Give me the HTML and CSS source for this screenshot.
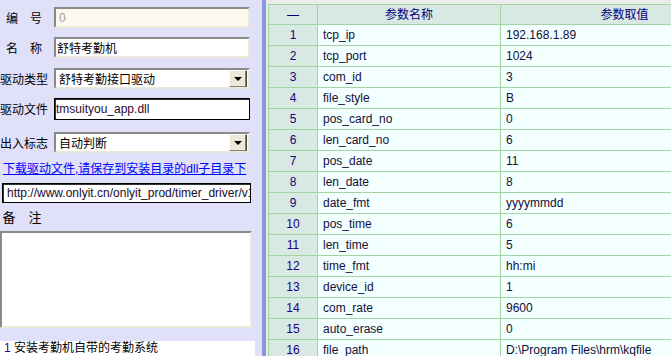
FILE: index.html
```html
<!DOCTYPE html>
<html lang="zh">
<head>
<meta charset="utf-8">
<title>考勤机</title>
<link rel="stylesheet" href="styles.css">
</head>
<body>
<div class="app">
  <div class="left">
    <div class="field f1"><span class="lbl">编　号</span><div class="box inset disabled">0</div></div>
    <div class="field f2"><span class="lbl">名　称</span><div class="box inset">舒特考勤机</div></div>
    <div class="field f3"><span class="lbl">驱动类型</span><div class="box inset select"><span class="val">舒特考勤接口驱动</span><span class="drop"><i class="tri"></i></span></div></div>
    <div class="field f4"><span class="lbl">驱动文件</span><div class="box solid file">tmsuityou_app.dll</div></div>
    <div class="field f5"><span class="lbl">出入标志</span><div class="box inset select"><span class="val">自动判断</span><span class="drop"><i class="tri"></i></span></div></div>
    <a class="dl" href="#">下载驱动文件,请保存到安装目录的dll子目录下</a>
    <div class="url solid">http://www.onlyit.cn/onlyit_prod/timer_driver/v1/tmsuityou_app.dll</div>
    <div class="memo-lbl">备　注</div>
    <div class="memo inset"></div>
    <div class="status"><span class="num">1</span> 安装考勤机自带的考勤系统</div>
  </div>
  <div class="divider"></div>
  <div class="right">
    <table class="grid">
      <colgroup><col class="c1"><col class="c2"><col class="c3"></colgroup>
      <thead><tr><th>—</th><th>参数名称</th><th>参数取值</th></tr></thead>
      <tbody>
        <tr><td class="n">1</td><td>tcp_ip</td><td>192.168.1.89</td></tr>
        <tr><td class="n">2</td><td>tcp_port</td><td>1024</td></tr>
        <tr><td class="n">3</td><td>com_id</td><td>3</td></tr>
        <tr><td class="n">4</td><td>file_style</td><td>B</td></tr>
        <tr><td class="n">5</td><td>pos_card_no</td><td>0</td></tr>
        <tr><td class="n">6</td><td>len_card_no</td><td>6</td></tr>
        <tr><td class="n">7</td><td>pos_date</td><td>11</td></tr>
        <tr><td class="n">8</td><td>len_date</td><td>8</td></tr>
        <tr><td class="n">9</td><td>date_fmt</td><td>yyyymmdd</td></tr>
        <tr><td class="n">10</td><td>pos_time</td><td>6</td></tr>
        <tr><td class="n">11</td><td>len_time</td><td>5</td></tr>
        <tr><td class="n">12</td><td>time_fmt</td><td>hh:mi</td></tr>
        <tr><td class="n">13</td><td>device_id</td><td>1</td></tr>
        <tr><td class="n">14</td><td>com_rate</td><td>9600</td></tr>
        <tr><td class="n">15</td><td>auto_erase</td><td>0</td></tr>
        <tr><td class="n">16</td><td>file_path</td><td>D:\Program Files\hrm\kqfile</td></tr>
      </tbody>
    </table>
  </div>
</div>
</body>
</html>
```
FILE: styles.css
```css
html, body {
  margin: 0;
  padding: 0;
  width: 671px;
  height: 356px;
  overflow: hidden;
  font-family: "Liberation Sans", "Noto Sans CJK SC", sans-serif;
  font-size: 12px;
}
.app {
  display: flex;
  width: 671px;
  height: 356px;
  overflow: hidden;
}
.left {
  width: 262px;
  flex: none;
  background: #e0e0f8;
  display: flex;
  flex-direction: column;
}
.field {
  display: flex;
  align-items: center;
  height: 21px;
}
.f1 { margin-top: 7px; }
.f2 { margin-top: 9px; }
.f3 { margin-top: 10px; }
.f4 { margin-top: 9px; height: 22px; }
.f5 { margin-top: 12px; }
.lbl {
  width: 48px;
  flex: none;
  text-align: center;
  white-space: nowrap;
  font-family: "Noto Sans CJK SC", sans-serif;
  font-size: 12px;
  line-height: 14px;
  color: #000;
}
.box {
  box-sizing: border-box;
  margin-left: 6px;
  width: 196px;
  height: 100%;
  background: #fff;
  display: flex;
  align-items: center;
  padding-left: 1px;
  color: #000;
  white-space: nowrap;
  overflow: hidden;
}
.inset {
  border: 2px solid;
  border-color: #8a8a8a #ece9d8 #ece9d8 #8a8a8a;
}
.disabled {
  background: #fcf8ee;
  color: #a0a0a0;
  padding-left: 3px;
}
.solid {
  border: 1px solid #000;
  box-shadow: inset 1px 1px 0 #333;
}
.file {
  color: #2a0a30;
  padding-left: 1px;
}
.select {
  padding-left: 3px;
  padding-right: 1px;
  justify-content: space-between;
}
.drop {
  box-sizing: border-box;
  width: 17px;
  height: 17px;
  background: #ece9d8;
  border: 1px solid;
  border-color: #fff #808080 #808080 #fff;
  box-shadow: 1px 1px 0 #404040;
  display: flex;
  align-items: center;
  justify-content: center;
  margin-right: 1px;
}
.tri {
  width: 0;
  height: 0;
  border-left: 4px solid transparent;
  border-right: 4px solid transparent;
  border-top: 4px solid #000;
  margin-top: 1px;
}
.dl {
  margin-top: 9px;
  margin-left: 3px;
  height: 14px;
  line-height: 14px;
  color: #0000ff;
  text-decoration: underline;
  white-space: nowrap;
  font-size: 12px;
}
.url {
  box-sizing: border-box;
  margin-top: 7px;
  margin-left: 2px;
  width: 249px;
  height: 20px;
  background: #fff;
  padding-left: 4px;
  line-height: 18px;
  white-space: nowrap;
  overflow: hidden;
  color: #1a0a2a;
}
.memo-lbl {
  margin-top: 7px;
  height: 14px;
  line-height: 14px;
  width: 44px;
  text-align: center;
  font-family: "Noto Sans CJK SC", sans-serif;
  font-size: 13px;
}
.memo {
  box-sizing: border-box;
  margin-top: 7px;
  width: 252px;
  height: 97px;
  background: #fff;
}
.status {
  margin-top: 13px;
  width: 255px;
  height: 15px;
  line-height: 15px;
  background: #fff;
  padding-left: 4px;
  box-sizing: border-box;
  white-space: nowrap;
  font-size: 12px;
  color: #000;
}
.num { color: #400090; }
.divider {
  width: 4px;
  flex: none;
  background: #8898dc;
}
.right {
  flex: 1;
  background: #ebebeb;
  padding: 4px 0 0 2px;
  overflow: hidden;
}
.grid {
  border-collapse: collapse;
  table-layout: fixed;
  width: 480px;
  background: #f4ffff;
}
.c1 { width: 49px; }
.c2 { width: 183px; }
.c3 { width: 248px; }
.grid th, .grid td {
  border: 1px solid #a4d4a4;
  padding: 0 0 0 5px;
  white-space: nowrap;
  overflow: hidden;
  text-align: left;
  color: #10103a;
  font-weight: normal;
  line-height: 14px;
}
.grid th {
  height: 19px;
  background: #d8e8e2;
  text-align: center;
  color: #000080;
  padding: 0;
  font-size: 12px;
}
.grid td { height: 20px; }
.grid td.n {
  background: #d8e8e2;
  text-align: center;
  padding: 0;
  color: #200080;
}
```
